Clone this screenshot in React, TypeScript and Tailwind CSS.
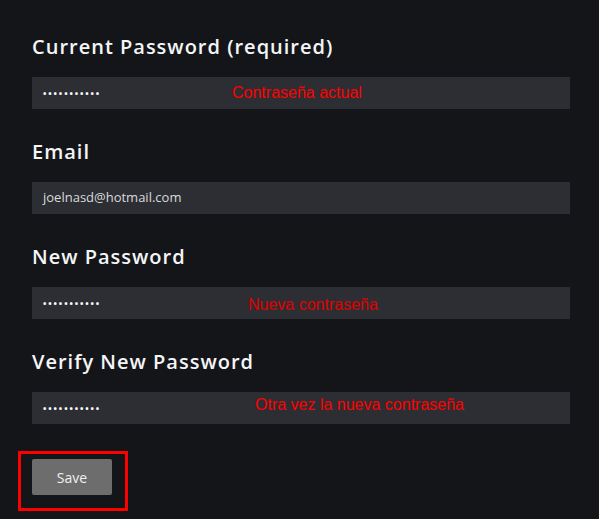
const fields = [
  { label: 'Current Password (required)', value: '', note: 'Contraseña actual', noteClass: 'left-[200px] top-[8px] text-[#ff0000]' },
  { label: 'Email', value: 'joelnasd@hotmail.com', note: '', noteClass: '' },
  { label: 'New Password', value: '', note: 'Nueva contraseña', noteClass: 'left-[216px] top-[10px] text-[#e00000]' },
  { label: 'Verify New Password', value: '', note: 'Otra vez la nueva contraseña', noteClass: 'left-[223px] top-[5px] text-[#ff0000]' },
];

function Field({ label, value, note, noteClass }: (typeof fields)[number]) {
  return (
    <div>
      <h3 className="mb-4 text-[20px] font-semibold leading-[28px] tracking-[0.05em] text-[#f4f5f7]">{label}</h3>
      <div className="relative flex h-8 items-center bg-[#2c2e33] px-[11px]">
        {value ? (
          <span className="text-[13px] text-[#d9dadc]">{value}</span>
        ) : (
          <span className="text-[9px] font-bold leading-none tracking-[1.9px] text-white">•••••••••••</span>
        )}
        {note && (
          <span className={`absolute font-['Liberation_Sans',Arial,sans-serif] text-[16px] leading-[16px] ${noteClass}`}>
            {note}
          </span>
        )}
      </div>
    </div>
  );
}

export default function App() {
  return (
    <div className="min-h-[519px] bg-[#141519] pl-8 pr-[29px] pt-[33px] font-['Open_Sans',sans-serif]">
      <div className="flex flex-col gap-[29px]">
        {fields.map((f) => (
          <Field key={f.label} {...f} />
        ))}
      </div>
      <div className="relative mt-[35px] w-20">
        <button className="h-9 w-20 rounded-[2px] bg-[#6d6d6d] text-[14px] text-[#f0f0f0]">Save</button>
        {/* annotation box */}
        <div className="absolute left-[-14px] top-[-8px] h-[60px] w-[110px] border-[3px] border-[#ff0000]" />
      </div>
    </div>
  );
}
